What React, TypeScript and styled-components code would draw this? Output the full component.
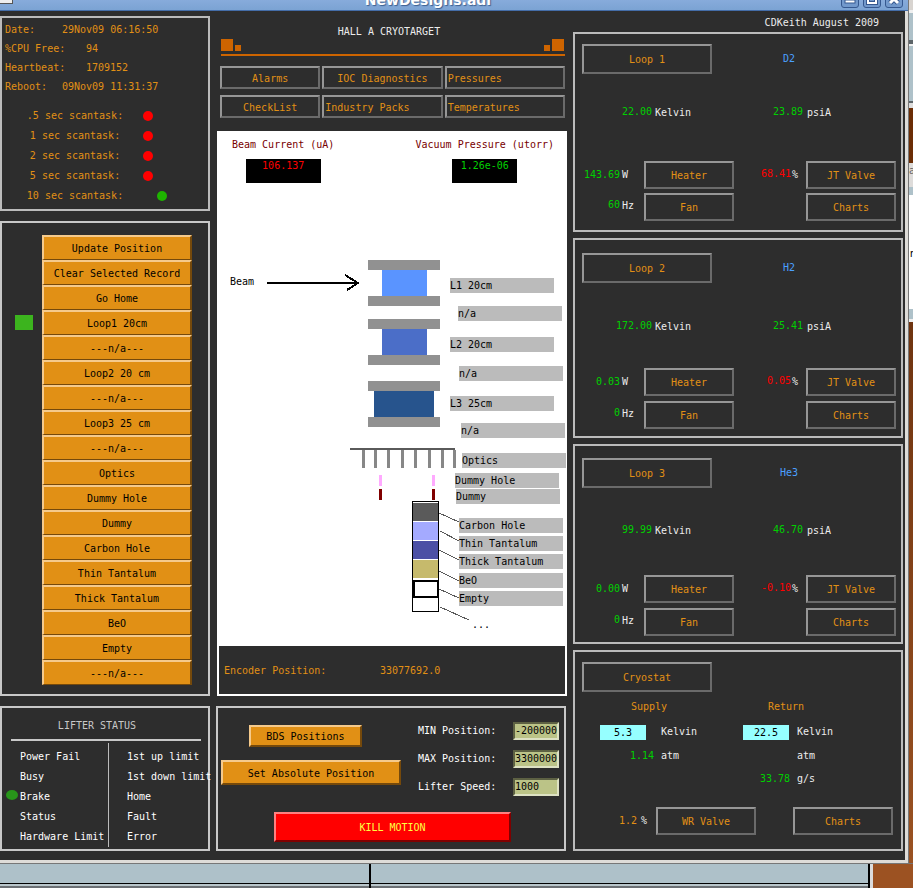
import React from "react";
import styled, { createGlobalStyle, css } from "styled-components";

const ORANGE = "#e19015";
const DARK = "#2d2d2d";
const GREEN = "#00d000";
const RED = "#ff0000";
const TEAL = "#aec1c9";

const GlobalStyle = createGlobalStyle`
  *, *::before, *::after { box-sizing: border-box; }
  body {
    margin: 0;
    background: #9a5222;
    font: 10px/16px "DejaVu Sans Mono", "Liberation Mono", monospace;
    color: #ececec;
    overflow: hidden;
  }
  button, input { font: inherit; color: inherit; margin: 0; border-radius: 0; }
  h1, h2, p, ul, dl, dd, dt { margin: 0; padding: 0; font: inherit; }
  ul { list-style: none; }
`;

/* ---------- desktop and window frame ---------- */

const Desktop = styled.div`
  display: grid;
  grid-template-columns: minmax(0, 1fr) 5px;
`;

const Window = styled.div`
  background: ${DARK};
  border-bottom: 3px solid #dedcd8;
`;

const TitleBar = styled.header`
  position: relative;
  height: 11px;
  overflow: hidden;
  display: flex;
  justify-content: center;
  align-items: flex-end;
  background: linear-gradient(#87abdb, #7ba3d3);
  border-bottom: 1px solid #446da8;
`;

const TitleText = styled.span`
  font: bold 14px/20px "DejaVu Sans", sans-serif;
  color: #fff;
  text-shadow: 1px 1px 1px #3c6090;
  padding-right: 52px;
`;

const TitleCorner = styled.span`
  position: absolute;
  left: 0;
  top: 0;
  width: 13px;
  height: 4px;
  background: #eee;
  border-right: 1px solid #555;
  border-bottom: 1px solid #555;
`;

const WindowButtons = styled.div`
  position: absolute;
  right: 5px;
  bottom: 2px;
  display: flex;
  gap: 4px;
`;

const WindowButton = styled.button`
  width: 18px;
  height: 18px;
  padding: 0;
  border: 1px solid #35588f;
  border-radius: 3px;
  background: #7299cc;
  display: grid;
  place-items: center;
  svg { display: block; }
`;

const Body = styled.main`
  display: grid;
  grid-template-columns: minmax(0, 210fr) minmax(0, 351fr) minmax(0, 330fr);
  gap: 6px;
  padding: 5px 2px 9px 0;
  border-right: 3px solid #dedcd8;
`;

const Column = styled.div<{ $gap: number }>`
  display: flex;
  flex-direction: column;
  gap: ${(p) => p.$gap}px;
`;

const SideStrip = styled.div`
  display: flex;
  flex-direction: column;
  overflow: hidden;
  border-left: 1px solid #777;
`;

const Patch = styled.div<{ $h?: number; $c: string; $ink?: string }>`
  ${(p) => (p.$h ? `height: ${p.$h}px;` : "flex: 1;")}
  background: ${(p) => p.$c};
  color: ${(p) => p.$ink ?? "#000"};
  overflow: hidden;
  flex-shrink: ${(p) => (p.$h ? 0 : 1)};
`;

const Bottom = styled.footer`
  grid-column: 1 / -1;
  height: 25px;
  display: flex;
  border-top: 1px solid #777;
`;

const BottomBar = styled.div<{ $w: number }>`
  flex: ${(p) => p.$w} 1 0;
  border-right: 2px solid #000;
  background: linear-gradient(${TEAL} 19px, #000 19px 20px, #b9c6cb 20px 22px, #6b7074 22px);
`;

const BottomEdge = styled.div`
  width: 43px;
  border-left: 3px solid #dcdcdc;
  background: #9c5222;
`;

/* ---------- shared parts ---------- */

const Panel = styled.section<{ $line?: string }>`
  border: 2px solid ${(p) => p.$line ?? "#bbbbbb"};
  white-space: pre;
`;

const raised = css`
  display: block;
  padding: 2px 0 0;
  overflow: hidden;
  white-space: pre;
  text-align: center;
  cursor: pointer;
`;

const LinkButton = styled.button<{ $w?: number; $h: number; $left?: boolean }>`
  ${raised}
  width: ${(p) => (p.$w ? `${p.$w}px` : "100%")};
  height: ${(p) => p.$h}px;
  flex-shrink: 0;
  background: ${DARK};
  color: ${ORANGE};
  border: 2px solid;
  border-color: #969696 #6a6a6a #6a6a6a #969696;
  ${(p) => p.$left && "text-align: left; padding-left: 1px;"}
`;

const ActionButton = styled.button<{ $w: number; $h: number }>`
  ${raised}
  width: ${(p) => p.$w}px;
  height: ${(p) => p.$h}px;
  background: ${ORANGE};
  color: #000;
  border: 2px solid;
  border-color: #f5ca8c #75490b #75490b #f5ca8c;
`;

const KillButton = styled(ActionButton)`
  background: #ff0000;
  color: #ffff40;
  border-color: #ff8080 #800000 #800000 #ff8080;
`;

const Dot = styled.span<{ $c: string; $shift?: boolean }>`
  width: 10px;
  height: 10px;
  border-radius: 50%;
  background: ${(p) => p.$c};
  margin-left: ${(p) => (p.$shift ? 14 : 0)}px;
`;

/* ---------- left column ---------- */

const SystemPanel = styled(Panel)`
  padding: 2px 0 3px;
  color: ${ORANGE};
`;

const InfoRow = styled.div<{ $wide?: boolean }>`
  display: grid;
  grid-template-columns: ${(p) => (p.$wide ? 81 : 57)}px auto;
  padding-left: 3px;
  line-height: 19px;
`;

const ScanList = styled.ul`
  margin-top: 10px;
`;

const ScanRow = styled.li`
  display: grid;
  grid-template-columns: 132px auto;
  column-gap: 2px;
  align-items: center;
  padding-left: 7px;
  line-height: 20px;
  text-align: center;
`;

const PositionPanel = styled(Panel)`
  padding: 12px 16px 9px 13px;
`;

const PositionRow = styled.li`
  display: grid;
  grid-template-columns: 27px minmax(0, 1fr);
  align-items: center;
`;

const PositionButton = styled(ActionButton)`
  grid-column: 2;
  width: 100%;
  border-bottom-width: 1px;
`;

const SelectedMark = styled.span`
  grid-row: 1;
  width: 18px;
  height: 15px;
  background: #3cb41e;
`;

const LifterPanel = styled(Panel)`
  padding: 10px 7px 2px 9px;
  color: #fff;
`;

const LifterTitle = styled.h2`
  color: #c8c8c8;
  text-align: center;
  padding: 0 18px 5px 0;
  border-bottom: 2px solid #c8c8c8;
`;

const LifterGrid = styled.div`
  display: grid;
  grid-template-columns: 97px 1fr;
  margin-top: 2px;
`;

const LifterList = styled.ul<{ $divided?: boolean }>`
  line-height: 20px;
  padding: 4px 0 0 ${(p) => (p.$divided ? 18 : 9)}px;
  border-left: ${(p) => (p.$divided ? "1px solid #bbb" : "0")};
`;

const LifterItem = styled.li`
  position: relative;
`;

const BrakeDot = styled.span`
  position: absolute;
  left: -14px;
  top: 3px;
  width: 12px;
  height: 10px;
  border-radius: 50%;
  background: #28961a;
`;

/* ---------- middle column ---------- */

const Banner = styled.header`
  padding: 8px 2px 0 5px;
`;

const BannerTitle = styled.h1`
  text-align: center;
  line-height: 15px;
  padding-right: 8px;
`;

const BannerLine = styled.div`
  display: flex;
  justify-content: space-between;
  padding-bottom: 3px;
  border-bottom: 2px solid #cd6400;
`;

const Squares = styled.div`
  display: flex;
  align-items: flex-end;
  gap: 2px;
  padding-right: 1px;
`;

const Square = styled.span<{ $s: number }>`
  width: ${(p) => p.$s}px;
  height: ${(p) => p.$s}px;
  background: #cd6400;
`;

const LinkGrid = styled.nav`
  display: grid;
  grid-template-columns: 100fr 120fr 120fr;
  gap: 6px 2px;
  padding: 10px 2px 13px 4px;
`;

const Sheet = styled.section`
  background: #fff;
  color: #000;
  margin-left: 1px;
  padding: 6px 0 2px;
  white-space: pre;
`;

const Meters = styled.div`
  display: flex;
  justify-content: space-between;
  padding: 0 13px 0 15px;
  height: 47px;
`;

const Meter = styled.div`
  color: #780000;
  display: flex;
  flex-direction: column;
  align-items: center;
  gap: 6px;
`;

const MeterValue = styled.output<{ $w: number; $c: string }>`
  width: ${(p) => p.$w}px;
  height: 24px;
  line-height: 14px;
  text-align: center;
  background: #000;
  color: ${(p) => p.$c};
`;

const Diagram = styled.div`
  position: relative;
  height: 462px;
  svg { display: block; }
`;

const Tag = styled.span<{ $x: number; $y: number; $plain?: boolean }>`
  position: absolute;
  left: ${(p) => p.$x}px;
  top: ${(p) => p.$y}px;
  height: 15px;
  line-height: 15px;
  ${(p) => !p.$plain && "width: 104px; background: #bbbbbb;"}
`;

const Encoder = styled.div`
  display: grid;
  grid-template-columns: 156px auto;
  margin: 0 2px;
  padding: 17px 5px 15px;
  background: ${DARK};
  color: ${ORANGE};
`;

const MotionPanel = styled(Panel)`
  margin-right: 1px;
  padding: 14px 5px 7px 3px;
`;

const MotionTop = styled.div`
  display: flex;
  justify-content: space-between;
  margin-bottom: 16px;
`;

const MotionButtons = styled.div`
  display: flex;
  flex-direction: column;
  gap: 13px;
  padding-top: 3px;
`;

const BdsSlot = styled.div`
  padding-left: 28px;
`;

const Fields = styled.div`
  display: grid;
  gap: 10px;
`;

const Field = styled.label`
  display: grid;
  grid-template-columns: 95px 46px;
  height: 18px;
  line-height: 18px;
  color: #fff;
`;

const FieldInput = styled.input`
  width: 100%;
  height: 18px;
  padding: 0;
  background: #bbc387;
  color: #000;
  border: 2px solid;
  border-color: #5d6143 #dde1c3 #dde1c3 #5d6143;
  outline: 0;
`;

const KillSlot = styled.div`
  display: flex;
  justify-content: center;
  padding-left: 5px;
`;

/* ---------- right column ---------- */

const Credit = styled.p`
  text-align: right;
  line-height: 14px;
  padding-right: 24px;
  margin-bottom: -4px;
`;

const LoopPanel = styled(Panel)<{ $top: number }>`
  height: 200px;
  padding: ${(p) => p.$top}px 5px 0 7px;
`;

const Pair = styled.div<{ $gap?: number }>`
  display: grid;
  grid-template-columns: minmax(0, 1fr) minmax(0, 1fr);
  align-items: center;
  margin-top: ${(p) => p.$gap ?? 0}px;
`;

const Half = styled.div<{ $end?: boolean; $inset?: number }>`
  display: flex;
  align-items: center;
  justify-content: ${(p) => (p.$end ? "flex-end" : "flex-start")};
  padding-right: ${(p) => p.$inset ?? 0}px;
`;

const Caption = styled.h2<{ $w: number; $c: string }>`
  width: ${(p) => p.$w}px;
  text-align: center;
  color: ${(p) => p.$c};
`;

const Value = styled.output<{ $w: number; $c?: string; $up?: number }>`
  width: ${(p) => p.$w}px;
  flex-shrink: 0;
  text-align: right;
  color: ${(p) => p.$c ?? GREEN};
  padding-bottom: ${(p) => p.$up ?? 0}px;
`;

const Unit = styled.span<{ $w?: number; $gap: number; $up?: number }>`
  ${(p) => p.$w && `width: ${p.$w}px;`}
  margin-left: ${(p) => p.$gap}px;
  flex-shrink: 0;
  padding-bottom: ${(p) => p.$up ?? 0}px;
`;

const CryoPanel = styled(Panel)`
  height: 201px;
  padding: 10px 5px 0 7px;
`;

const TempSlot = styled.div<{ $w: number; $inset: number }>`
  width: ${(p) => p.$w}px;
  padding-right: ${(p) => p.$inset}px;
  display: flex;
  justify-content: flex-end;
`;

const Temp = styled.output`
  width: 46px;
  height: 15px;
  line-height: 15px;
  text-align: center;
  background: #96ffff;
  color: #000;
`;

/* ---------- data ---------- */

const info = [
  { label: "Date:", value: "29Nov09 06:16:50" },
  { label: "%CPU Free:", value: "94", wide: true },
  { label: "Heartbeat:", value: "1709152", wide: true },
  { label: "Reboot:", value: "09Nov09 11:31:37" },
];

const scans = [".5", "1", "2", "5", "10"];

const positions = [
  "Update Position", "Clear Selected Record", "Go Home", "Loop1 20cm", "---n/a---",
  "Loop2 20 cm", "---n/a---", "Loop3 25 cm", "---n/a---", "Optics", "Dummy Hole",
  "Dummy", "Carbon Hole", "Thin Tantalum", "Thick Tantalum", "BeO", "Empty", "---n/a---",
];

const tags: [string, number, number][] = [
  ["L1 20cm", 233, 94], ["n/a", 241, 122], ["L2 20cm", 233, 153], ["n/a", 242, 182],
  ["L3 25cm", 233, 212], ["n/a", 244, 239], ["Optics", 245, 269], ["Dummy Hole", 238, 289],
  ["Dummy", 239, 305], ["Carbon Hole", 242, 334], ["Thin Tantalum", 242, 352],
  ["Thick Tantalum", 242, 370], ["BeO", 242, 389], ["Empty", 242, 407],
];

const loops = [
  { name: "Loop 1", gas: "D2", temp: "22.00", psi: "23.89", watts: "143.69", valve: "68.41", hz: "60", top: 10, g1: 30, g2: 41, g3: 4 },
  { name: "Loop 2", gas: "H2", temp: "172.00", psi: "25.41", watts: "0.03", valve: "0.05", hz: "0", top: 13, g1: 35, g2: 34, g3: 5 },
  { name: "Loop 3", gas: "He3", temp: "99.99", psi: "46.70", watts: "0.00", valve: "-0.10", hz: "0", top: 12, g1: 34, g2: 37, g3: 5 },
];

/* ---------- components ---------- */

function TargetDrawing() {
  return (
    <svg width="350" height="462" viewBox="0 0 350 462" shapeRendering="crispEdges" aria-hidden="true">
      <g fill="#919191">
        {[76, 112, 135, 171, 197, 233].map((y) => (
          <rect key={y} x="151" y={y} width="72" height="10" />
        ))}
      </g>
      <rect x="165" y="86" width="45" height="26" fill="#5a94ff" />
      <rect x="165" y="145" width="45" height="26" fill="#4b6ec8" />
      <rect x="157" y="207" width="60" height="26" fill="#27548d" />
      <rect x="50" y="98" width="90" height="2" />
      <path d="M128 91 L141 99 L130 106" fill="none" stroke="#000" strokeWidth="2" />
      <rect x="133" y="264" width="105" height="2" fill="#5a5a5a" />
      <g fill="#878787">
        {[145, 157, 170, 184, 197, 211, 224, 236].map((x) => (
          <rect key={x} x={x} y="266" width="3" height="18" />
        ))}
      </g>
      <g fill="#ffaaff">
        <rect x="162" y="291" width="3" height="11" />
        <rect x="215" y="291" width="3" height="11" />
      </g>
      <g fill="#800000">
        <rect x="162" y="305" width="3" height="11" />
        <rect x="215" y="305" width="3" height="11" />
      </g>
      <rect x="195.5" y="317.5" width="26" height="110" fill="#fff" stroke="#000" />
      <rect x="196" y="319" width="25" height="18" fill="#5a5a5a" />
      <rect x="196" y="338" width="25" height="18" fill="#a4aaff" />
      <rect x="196" y="357" width="25" height="18" fill="#4c50a5" />
      <rect x="196" y="376" width="25" height="18" fill="#c6ba6c" />
      <rect x="197" y="397" width="24" height="16" fill="#fff" stroke="#000" strokeWidth="2" />
      <path
        d="M222 329 L242 338 M223 347 L242 357 M222 366 L242 376 M222 387 L242 397 M222 405 L242 414 M223 423 L252 436"
        fill="none"
        stroke="#5a5a5a"
      />
    </svg>
  );
}

function Loop({ d }: { d: (typeof loops)[number] }) {
  return (
    <LoopPanel $top={d.top}>
      <Pair>
        <LinkButton $w={130} $h={30}>{d.name}</LinkButton>
        <Caption $w={100} $c="#4ba0ff">{d.gas}</Caption>
      </Pair>
      <Pair $gap={d.g1}>
        <Half><Value $w={70} $up={2}>{d.temp}</Value><Unit $gap={3}>Kelvin</Unit></Half>
        <Half><Value $w={64} $up={2}>{d.psi}</Value><Unit $gap={4}>psiA</Unit></Half>
      </Pair>
      <Pair $gap={d.g2 - 2}>
        <Half>
          <Value $w={38}>{d.watts}</Value><Unit $w={22} $gap={2}>W</Unit>
          <LinkButton $w={90} $h={28}>Heater</LinkButton>
        </Half>
        <Half $end>
          <Value $w={38} $c={RED} $up={2}>{d.valve}</Value><Unit $w={14} $gap={1}>%</Unit>
          <LinkButton $w={90} $h={28}>JT Valve</LinkButton>
        </Half>
      </Pair>
      <Pair $gap={d.g3}>
        <Half>
          <Value $w={38} $up={4}>{d.hz}</Value><Unit $w={22} $gap={2} $up={2}>Hz</Unit>
          <LinkButton $w={90} $h={28}>Fan</LinkButton>
        </Half>
        <Half $end><LinkButton $w={90} $h={28}>Charts</LinkButton></Half>
      </Pair>
    </LoopPanel>
  );
}

export default function App() {
  return (
    <>
      <GlobalStyle />
      <Desktop>
        <Window>
          <TitleBar>
            <TitleCorner />
            <TitleText>NewDesigns.adl</TitleText>
            <WindowButtons>
              <WindowButton aria-label="Minimize">
                <svg width="12" height="16"><rect x="1" y="9" width="10" height="3" fill="#fff" stroke="#35588f" /></svg>
              </WindowButton>
              <WindowButton aria-label="Maximize">
                <svg width="12" height="16"><rect x="2" y="4" width="8" height="8" fill="none" stroke="#35588f" strokeWidth="4" /><rect x="2" y="4" width="8" height="8" fill="none" stroke="#fff" strokeWidth="2" /></svg>
              </WindowButton>
              <WindowButton aria-label="Close">
                <svg width="12" height="16"><path d="M2 4 L10 12 M10 4 L2 12" stroke="#35588f" strokeWidth="5" /><path d="M2 4 L10 12 M10 4 L2 12" stroke="#fff" strokeWidth="3" /></svg>
              </WindowButton>
            </WindowButtons>
          </TitleBar>

          <Body>
            <Column $gap={10}>
              <SystemPanel>
                {info.map((r) => (
                  <InfoRow key={r.label} $wide={r.wide}><span>{r.label}</span><span>{r.value}</span></InfoRow>
                ))}
                <ScanList>
                  {scans.map((s) => (
                    <ScanRow key={s}>
                      <span>{s} sec scantask:</span>
                      <Dot $c={s === "10" ? "#1eb400" : RED} $shift={s === "10"} />
                    </ScanRow>
                  ))}
                </ScanList>
              </SystemPanel>

              <PositionPanel $line="#c8c8c8">
                <ul>
                  {positions.map((p, i) => (
                    <PositionRow key={i}>
                      {i === 3 && <SelectedMark />}
                      <PositionButton $w={150} $h={25}>{p}</PositionButton>
                    </PositionRow>
                  ))}
                </ul>
              </PositionPanel>

              <LifterPanel $line="#c8c8c8">
                <LifterTitle>LIFTER STATUS</LifterTitle>
                <LifterGrid>
                  <LifterList>
                    {["Power Fail", "Busy", "Brake", "Status", "Hardware Limit"].map((t) => (
                      <LifterItem key={t}>{t === "Brake" && <BrakeDot />}{t}</LifterItem>
                    ))}
                  </LifterList>
                  <LifterList $divided>
                    {["1st up limit", "1st down limit", "Home", "Fault", "Error"].map((t) => (
                      <LifterItem key={t}>{t}</LifterItem>
                    ))}
                  </LifterList>
                </LifterGrid>
              </LifterPanel>
            </Column>

            <Column $gap={10}>
              <div>
                <Banner>
                  <BannerTitle>HALL A CRYOTARGET</BannerTitle>
                  <BannerLine>
                    <Squares><Square $s={12} /><Square $s={6} /></Squares>
                    <Squares><Square $s={6} /><Square $s={12} /></Squares>
                  </BannerLine>
                </Banner>
                <LinkGrid>
                  <LinkButton $h={23}>Alarms</LinkButton>
                  <LinkButton $h={23}>IOC Diagnostics</LinkButton>
                  <LinkButton $h={23} $left>Pressures</LinkButton>
                  <LinkButton $h={23}>CheckList</LinkButton>
                  <LinkButton $h={23} $left>Industry Packs</LinkButton>
                  <LinkButton $h={23} $left>Temperatures</LinkButton>
                </LinkGrid>
                <Sheet>
                  <Meters>
                    <Meter>Beam Current (uA)<MeterValue $w={75} $c={RED}>106.137</MeterValue></Meter>
                    <Meter>Vacuum Pressure (utorr)<MeterValue $w={65} $c={GREEN}>1.26e-06</MeterValue></Meter>
                  </Meters>
                  <Diagram>
                    <TargetDrawing />
                    <Tag $x={13} $y={90} $plain>Beam</Tag>
                    {tags.map(([t, x, y]) => (
                      <Tag key={`${x}-${y}`} $x={x} $y={y}>{t}</Tag>
                    ))}
                    <Tag $x={255} $y={433} $plain>...</Tag>
                  </Diagram>
                  <Encoder><span>Encoder Position:</span><output>33077692.0</output></Encoder>
                </Sheet>
              </div>

              <MotionPanel $line="#c8c8c8">
                <MotionTop>
                  <MotionButtons>
                    <BdsSlot><ActionButton $w={113} $h={22}>BDS Positions</ActionButton></BdsSlot>
                    <ActionButton $w={180} $h={25}>Set Absolute Position</ActionButton>
                  </MotionButtons>
                  <Fields>
                    <Field>MIN Position:<FieldInput defaultValue="-200000" /></Field>
                    <Field>MAX Position:<FieldInput defaultValue="3300000" /></Field>
                    <Field>Lifter Speed:<FieldInput defaultValue="1000" /></Field>
                  </Fields>
                </MotionTop>
                <KillSlot><KillButton $w={237} $h={30}>KILL MOTION</KillButton></KillSlot>
              </MotionPanel>
            </Column>

            <Column $gap={6}>
              <Credit>CDKeith August 2009</Credit>
              {loops.map((d) => <Loop key={d.name} d={d} />)}
              <CryoPanel>
                <LinkButton $w={130} $h={30}>Cryostat</LinkButton>
                <Pair $gap={7}>
                  <Caption $w={134} $c={ORANGE}>Supply</Caption>
                  <Caption $w={94} $c={ORANGE}>Return</Caption>
                </Pair>
                <Pair $gap={9}>
                  <Half><TempSlot $w={72} $inset={8}><Temp>5.3</Temp></TempSlot><Unit $gap={7}>Kelvin</Unit></Half>
                  <Half><TempSlot $w={51} $inset={1}><Temp>22.5</Temp></TempSlot><Unit $gap={7}>Kelvin</Unit></Half>
                </Pair>
                <Pair $gap={8}>
                  <Half><Value $w={72}>1.14</Value><Unit $gap={7}>atm</Unit></Half>
                  <Half><Value $w={51} /><Unit $gap={7}>atm</Unit></Half>
                </Pair>
                <Pair $gap={7}>
                  <Half />
                  <Half><Value $w={51}>33.78</Value><Unit $gap={7}>g/s</Unit></Half>
                </Pair>
                <Pair $gap={20}>
                  <Half>
                    <Value $w={55} $c={ORANGE}>1.2</Value><Unit $w={15} $gap={4}>%</Unit>
                    <LinkButton $w={100} $h={28}>WR Valve</LinkButton>
                  </Half>
                  <Half $end $inset={3}><LinkButton $w={100} $h={28}>Charts</LinkButton></Half>
                </Pair>
              </CryoPanel>
            </Column>
          </Body>
        </Window>

        <SideStrip>
          <Patch $h={10} $c="#d8d4d0" />
          <Patch $h={3} $c="#f0f0f0" />
          <Patch $h={27} $c={TEAL} />
          <Patch $h={4} $c="#5c6468" />
          <Patch $h={2} $c="#f0f0f0" />
          <Patch $h={55} $c={TEAL} />
          <Patch $h={2} $c="#5c6468" />
          <Patch $h={5} $c="#dcdcdc" />
          <Patch $h={55} $c="#6b2d05" />
          <Patch $h={24} $c="#dedcda" $ink="#666">a</Patch>
          <Patch $h={8} $c={TEAL} />
          <Patch $h={51} $c="#fff" />
          <Patch $h={63} $c="#fff">r</Patch>
          <Patch $h={10} $c={TEAL} />
          <Patch $h={3} $c="#eee" />
          <Patch $c="linear-gradient(#6f3410, #9a5222)" />
        </SideStrip>

        <Bottom>
          <BottomBar $w={371} />
          <BottomBar $w={499} />
          <BottomEdge />
        </Bottom>
      </Desktop>
    </>
  );
}
